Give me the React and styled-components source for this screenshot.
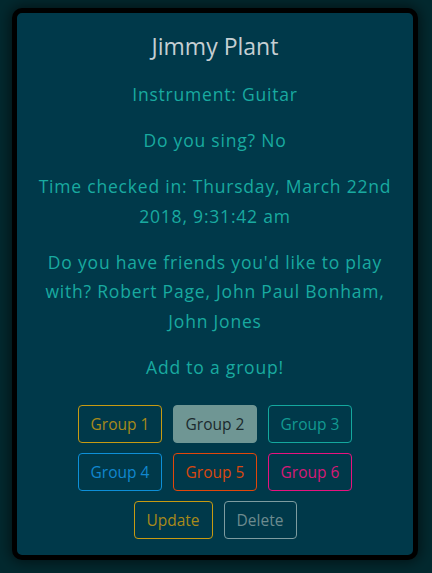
import React from "react";
import styled, { createGlobalStyle } from "styled-components";

const GlobalStyle = createGlobalStyle`
  html, body {
    margin: 0;
    padding: 0;
    background-color: #03292f;
  }
  body {
    font-family: "Open Sans", "Noto Sans", sans-serif;
    font-weight: 400;
  }
`;

const Page = styled.div`
  padding: 8px 14px 13px 12px;
  min-height: 573px;
  box-sizing: border-box;
`;

const Card = styled.div`
  background-color: #00394a;
  border: 5px solid #000;
  border-radius: 10px;
  box-shadow: 0 0 14px 2px rgba(0, 0, 0, 0.55);
  padding: 19px 12px 16px;
  text-align: center;
  box-sizing: border-box;
  height: 552px;
`;

const Name = styled.h2`
  margin: 0 0 19px;
  font-size: 23px;
  line-height: 29px;
  font-weight: 400;
  color: #c5cfd3;
`;

const Line = styled.p`
  margin: 0 0 16.5px;
  font-size: 17.5px;
  line-height: 29.5px;
  letter-spacing: 0.8px;
  color: #19aaa0;
`;

const ButtonRow = styled.div`
  display: flex;
  justify-content: center;
  gap: 11px;
  margin-top: ${(p) => p.$top || 10}px;
`;

const GroupButton = styled.button`
  font-family: inherit;
  font-weight: 400;
  font-size: 15.5px;
  line-height: 24px;
  height: 38px;
  padding: 6px 10px;
  min-width: ${(p) => p.$width || 0}px;
  border-radius: 4px;
  border: 1px solid ${(p) => p.$color};
  background-color: ${(p) => (p.$active ? p.$color : "transparent")};
  color: ${(p) => (p.$active ? "#1b2a2d" : p.$text || p.$color)};
  cursor: pointer;
`;

const groups = [
  [
    { label: "Group 1", color: "#c79a12", text: "#a88a1a" },
    { label: "Group 2", color: "#6f9694", active: true },
    { label: "Group 3", color: "#14a89e", text: "#139a92" },
  ],
  [
    { label: "Group 4", color: "#0d8fd8", text: "#1187cf" },
    { label: "Group 5", color: "#e2470a", text: "#d9480f" },
    { label: "Group 6", color: "#e8137f", text: "#d61a78" },
  ],
];

const App = () => (
  <>
    <GlobalStyle />
    <Page>
      <Card>
        <Name>Jimmy Plant</Name>
        <Line>Instrument: Guitar</Line>
        <Line>Do you sing? No</Line>
        <Line>
          Time checked in: Thursday, March 22nd
          <br />
          2018, 9:31:42 am
        </Line>
        <Line>
          Do you have friends you'd like to play
          <br />
          with? Robert Page, John Paul Bonham,
          <br />
          John Jones
        </Line>
        <Line>Add to a group!</Line>
        {groups.map((row, i) => (
          <ButtonRow key={i} $top={i === 0 ? 23 : 10}>
            {row.map((g) => (
              <GroupButton
                key={g.label}
                $color={g.color}
                $text={g.text}
                $active={g.active}
                $width={84}
              >
                {g.label}
              </GroupButton>
            ))}
          </ButtonRow>
        ))}
        <ButtonRow $top={10}>
          <GroupButton $color="#c79a12" $text="#a88a1a" $width={79}>
            Update
          </GroupButton>
          <GroupButton $color="#7e9ca0" $text="#6d8b8f" $width={73}>
            Delete
          </GroupButton>
        </ButtonRow>
      </Card>
    </Page>
  </>
);

export default App;
